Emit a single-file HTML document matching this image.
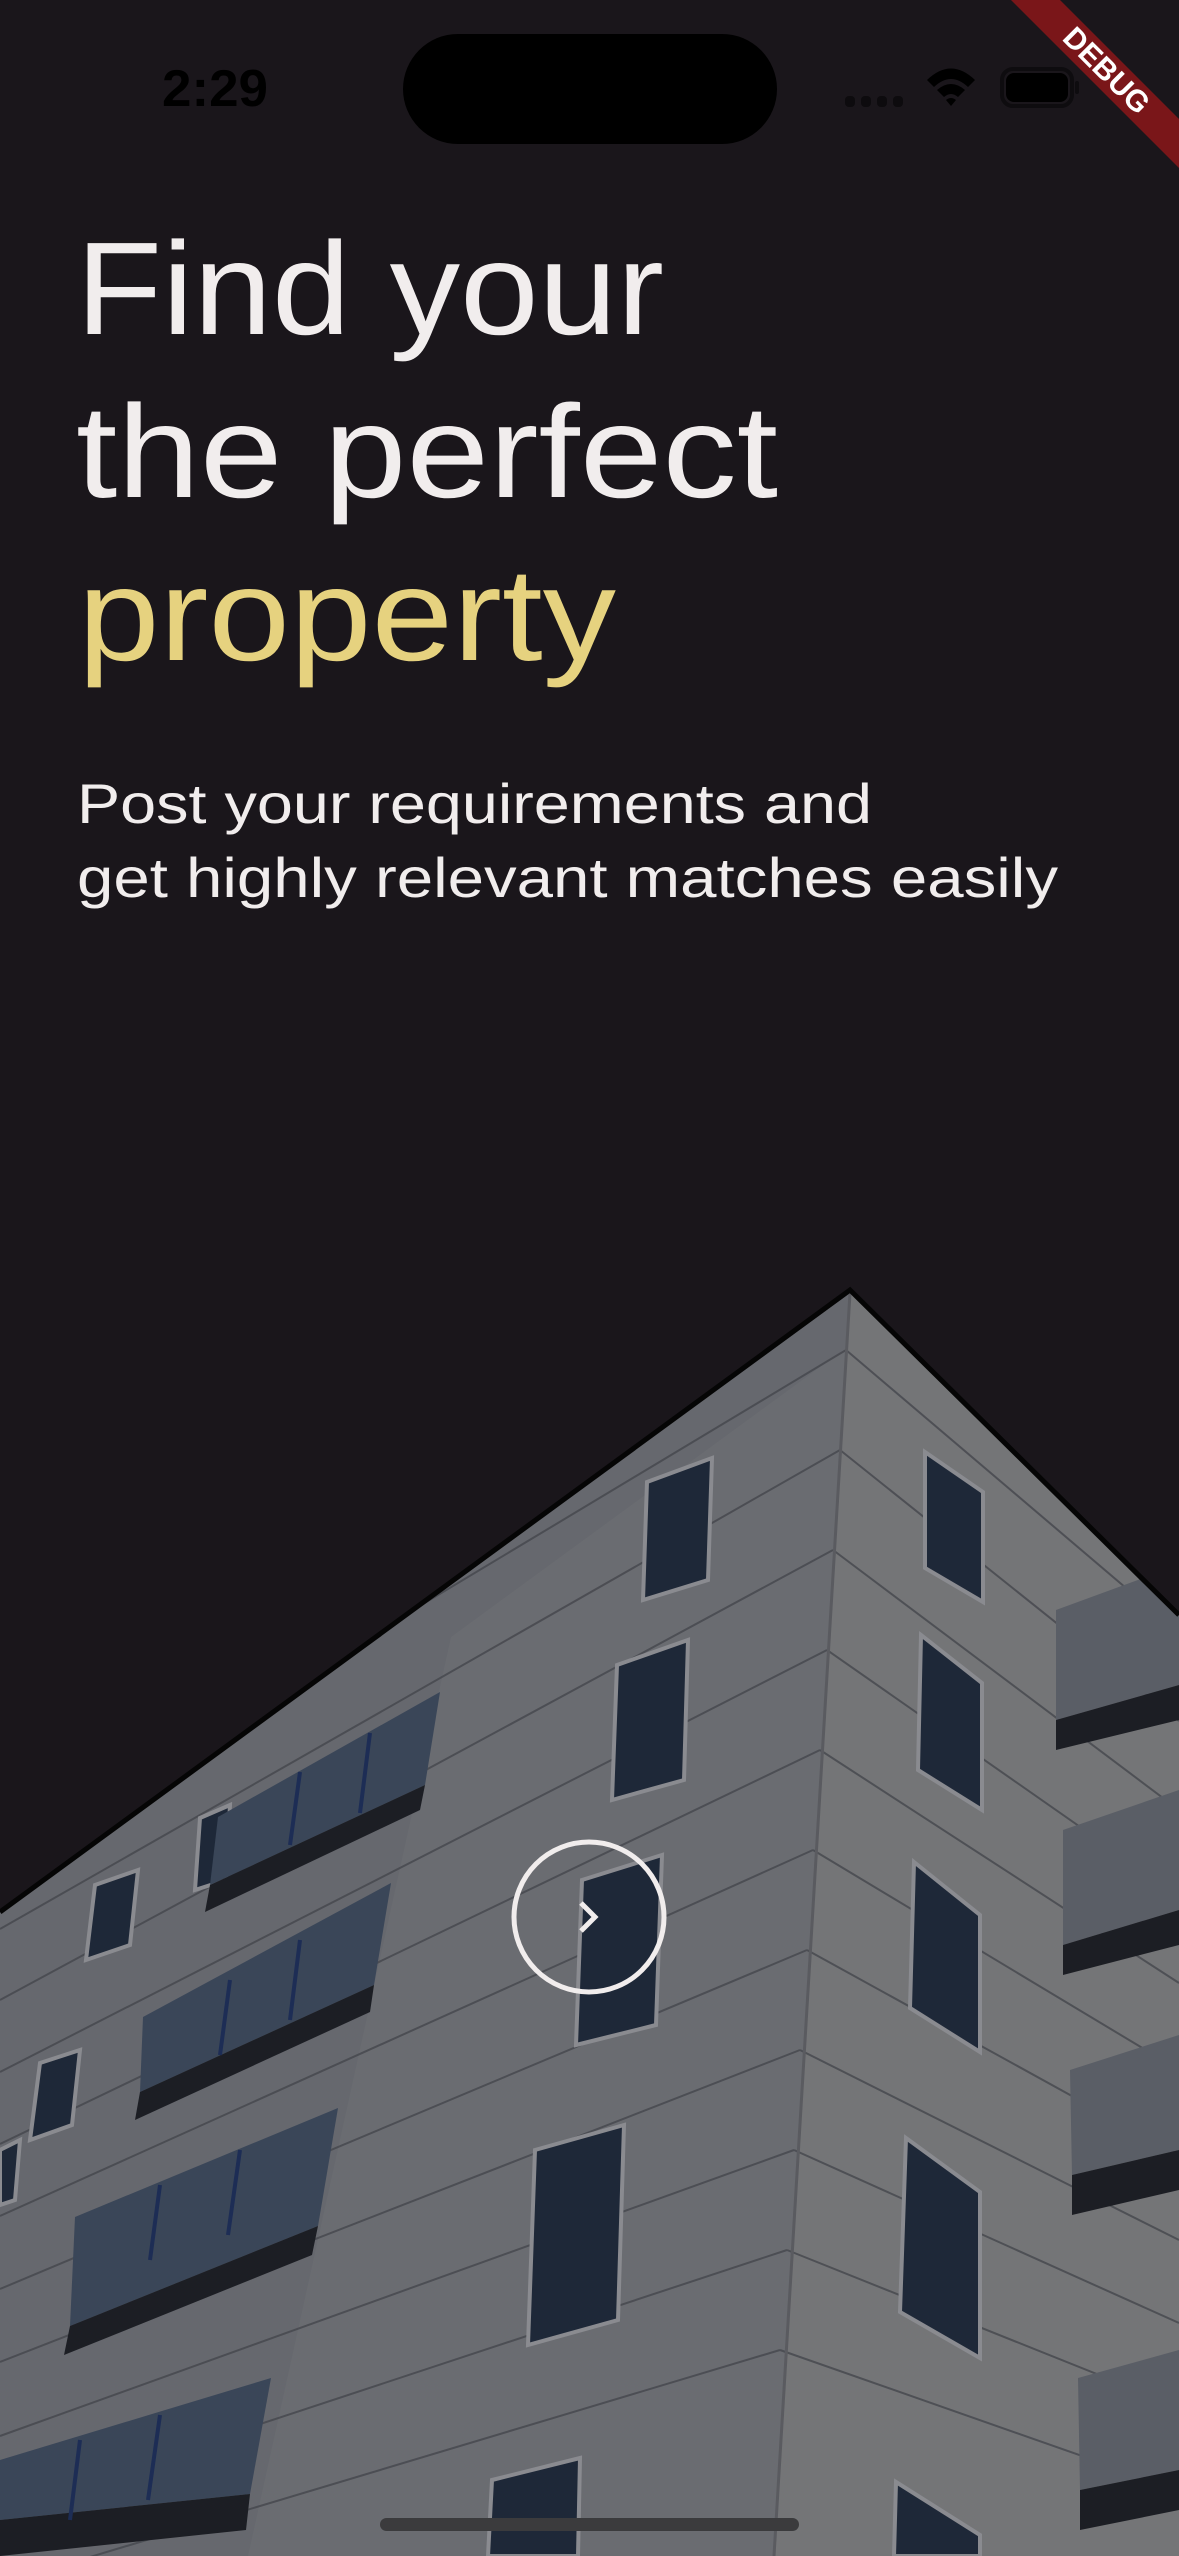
<!DOCTYPE html>
<html><head><meta charset="utf-8"><style>
html,body{margin:0;padding:0;background:#1a161b;}
svg{display:block}
</style></head><body>
<svg width="1179" height="2556" viewBox="0 0 1179 2556" xmlns="http://www.w3.org/2000/svg">
<defs><clipPath id="b"><polygon points="0,1912 850,1290 1179,1615 1179,2556 0,2556"/></clipPath></defs>
<rect width="1179" height="2556" fill="#1a161b"/>
<g clip-path="url(#b)">
<polygon points="850,1293 0,1912 0,2556 774,2556" fill="#66686e"/>
<polygon points="451,1637 850,1345 774,2556 248,2556" fill="#6a6c71"/>
<polygon points="850,1290 1179,1617 1179,2556 774,2556" fill="#747577"/>
<g stroke="#45474d" stroke-width="2" fill="none" opacity="0.8">
<line x1="846" y1="1350" x2="0" y2="1858"/><line x1="840" y1="1450" x2="0" y2="1929"/>
<line x1="833" y1="1550" x2="0" y2="2000"/><line x1="827" y1="1650" x2="0" y2="2072"/>
<line x1="820" y1="1750" x2="0" y2="2144"/><line x1="813" y1="1850" x2="0" y2="2216"/>
<line x1="807" y1="1950" x2="0" y2="2289"/><line x1="800" y1="2050" x2="0" y2="2362"/>
<line x1="794" y1="2150" x2="0" y2="2436"/><line x1="787" y1="2250" x2="0" y2="2510"/>
<line x1="780" y1="2350" x2="0" y2="2584"/>
<line x1="846" y1="1350" x2="1179" y2="1633"/><line x1="840" y1="1450" x2="1179" y2="1721"/>
<line x1="833" y1="1550" x2="1179" y2="1810"/><line x1="827" y1="1650" x2="1179" y2="1896"/>
<line x1="820" y1="1750" x2="1179" y2="1983"/><line x1="813" y1="1850" x2="1179" y2="2070"/>
<line x1="807" y1="1950" x2="1179" y2="2155"/><line x1="800" y1="2050" x2="1179" y2="2240"/>
<line x1="794" y1="2150" x2="1179" y2="2323"/><line x1="787" y1="2250" x2="1179" y2="2407"/>
<line x1="780" y1="2350" x2="1179" y2="2490"/>
</g>
<line x1="850" y1="1293" x2="774" y2="2556" stroke="#5a5b60" stroke-width="3"/>
<g fill="#1e2838" stroke="#8a8b90" stroke-width="4">
<polygon points="647,1482 712,1458 708,1580 643,1600"/>
<polygon points="617,1665 688,1640 684,1780 612,1800"/>
<polygon points="582,1880 662,1855 656,2025 576,2045"/>
<polygon points="535,2150 624,2125 618,2320 528,2345"/>
<polygon points="492,2480 580,2458 578,2556 488,2556"/>
<polygon points="200,1818 230,1805 226,1880 195,1890"/>
<polygon points="95,1885 138,1870 130,1945 86,1960"/>
<polygon points="40,2063 80,2050 72,2125 30,2140"/>
<polygon points="0,2150 20,2140 15,2200 0,2205"/>
</g>
<g fill="#1e2838" stroke="#8a8b90" stroke-width="4">
<polygon points="925,1452 983,1492 983,1602 925,1568"/>
<polygon points="921,1635 982,1683 982,1810 918,1770"/>
<polygon points="914,1862 980,1915 980,2052 910,2008"/>
<polygon points="906,2138 980,2192 980,2358 900,2312"/>
<polygon points="896,2482 980,2535 980,2556 894,2556"/>
</g>
<g>
<polygon points="218,1817 440,1692 425,1785 210,1885" fill="#3a4658"/>
<polygon points="210,1885 425,1785 420,1810 205,1912" fill="#1c1e24"/>
<polygon points="143,2017 391,1883 374,1985 140,2092" fill="#3a4658"/>
<polygon points="140,2092 374,1985 370,2012 135,2120" fill="#1c1e24"/>
<polygon points="75,2217 338,2108 318,2226 70,2326" fill="#3a4658"/>
<polygon points="70,2326 318,2226 312,2255 64,2355" fill="#1c1e24"/>
<polygon points="0,2460 271,2378 250,2494 0,2520" fill="#3a4658"/>
<polygon points="0,2520 250,2494 246,2530 0,2556" fill="#1c1e24"/>
</g>
<g stroke="#1d2d55" stroke-width="4">
<line x1="300" y1="1772" x2="290" y2="1845"/><line x1="370" y1="1733" x2="360" y2="1813"/>
<line x1="230" y1="1980" x2="220" y2="2055"/><line x1="300" y1="1940" x2="290" y2="2020"/>
<line x1="160" y1="2185" x2="150" y2="2260"/><line x1="240" y1="2150" x2="228" y2="2235"/>
<line x1="80" y1="2440" x2="70" y2="2520"/><line x1="160" y1="2415" x2="148" y2="2500"/>
</g>
<g>
<polygon points="1056,1610 1179,1565 1179,1685 1056,1720" fill="#5a5e66"/>
<polygon points="1056,1720 1179,1685 1179,1720 1056,1750" fill="#1c1e24"/>
<polygon points="1063,1830 1179,1790 1179,1910 1063,1945" fill="#5a5e66"/>
<polygon points="1063,1945 1179,1910 1179,1945 1063,1975" fill="#1c1e24"/>
<polygon points="1070,2070 1179,2035 1179,2150 1072,2175" fill="#5a5e66"/>
<polygon points="1072,2175 1179,2150 1179,2190 1072,2215" fill="#1c1e24"/>
<polygon points="1078,2378 1179,2350 1179,2470 1080,2490" fill="#5a5e66"/>
<polygon points="1080,2490 1179,2470 1179,2510 1080,2530" fill="#1c1e24"/>
</g>
</g>
<polyline points="0,1912 850,1290 1179,1615" fill="none" stroke="#050505" stroke-width="5"/>
<circle cx="589" cy="1917" r="75" fill="none" stroke="#f1eded" stroke-width="5"/>
<polyline points="581,1903 595,1917 581,1931" fill="none" stroke="#f1eded" stroke-width="5"/>
<rect x="380" y="2518" width="419" height="13" rx="6.5" fill="#3b3b3d"/>
<g font-family="Liberation Sans, sans-serif" fill="#f1eded">
<text x="76" y="334" font-size="132" textLength="588" lengthAdjust="spacingAndGlyphs">Find your</text>
<text x="76" y="497" font-size="132" textLength="702" lengthAdjust="spacingAndGlyphs">the perfect</text>
<text x="78" y="660" font-size="132" fill="#e6d27f" textLength="538" lengthAdjust="spacingAndGlyphs">property</text>
<text x="77" y="823" font-size="56" textLength="795" lengthAdjust="spacingAndGlyphs">Post your requirements and</text>
<text x="77" y="897" font-size="56" textLength="981" lengthAdjust="spacingAndGlyphs">get highly relevant matches easily</text>
</g>
<text x="162" y="106" font-family="Liberation Sans, sans-serif" font-weight="bold" font-size="52" fill="#000" textLength="106" lengthAdjust="spacingAndGlyphs">2:29</text>
<rect x="403" y="34" width="374" height="110" rx="55" fill="#000"/>
<g fill="#0d0b0e"><rect x="845" y="96" width="10" height="11" rx="4"/><rect x="861" y="96" width="10" height="11" rx="4"/><rect x="877" y="96" width="10" height="11" rx="4"/><rect x="893" y="96" width="10" height="11" rx="4"/></g>
<path d="M927,80 Q951,57 975,80 L968,87 Q951,71 934,87 Z M937,90 Q951,78 965,90 L958,97 Q951,91 944,97 Z M946,100 L951,106 L956,100 Q951,96 946,100Z" fill="#000"/>
<rect x="1002" y="69" width="70" height="37" rx="11" fill="none" stroke="#0e0c0f" stroke-width="4"/>
<rect x="1006" y="73" width="62" height="29" rx="8" fill="#000"/>
<rect x="1075" y="81" width="4" height="13" rx="2" fill="#0e0c0f"/>
<polygon points="1011,0 1060,0 1179,119 1179,168" fill="#7a1619"/>
<text x="0" y="0" transform="translate(1105,72) rotate(45)" text-anchor="middle" dominant-baseline="middle" font-family="Liberation Sans, sans-serif" font-weight="bold" font-size="30" fill="#fff">DEBUG</text>
</svg>
</body></html>
